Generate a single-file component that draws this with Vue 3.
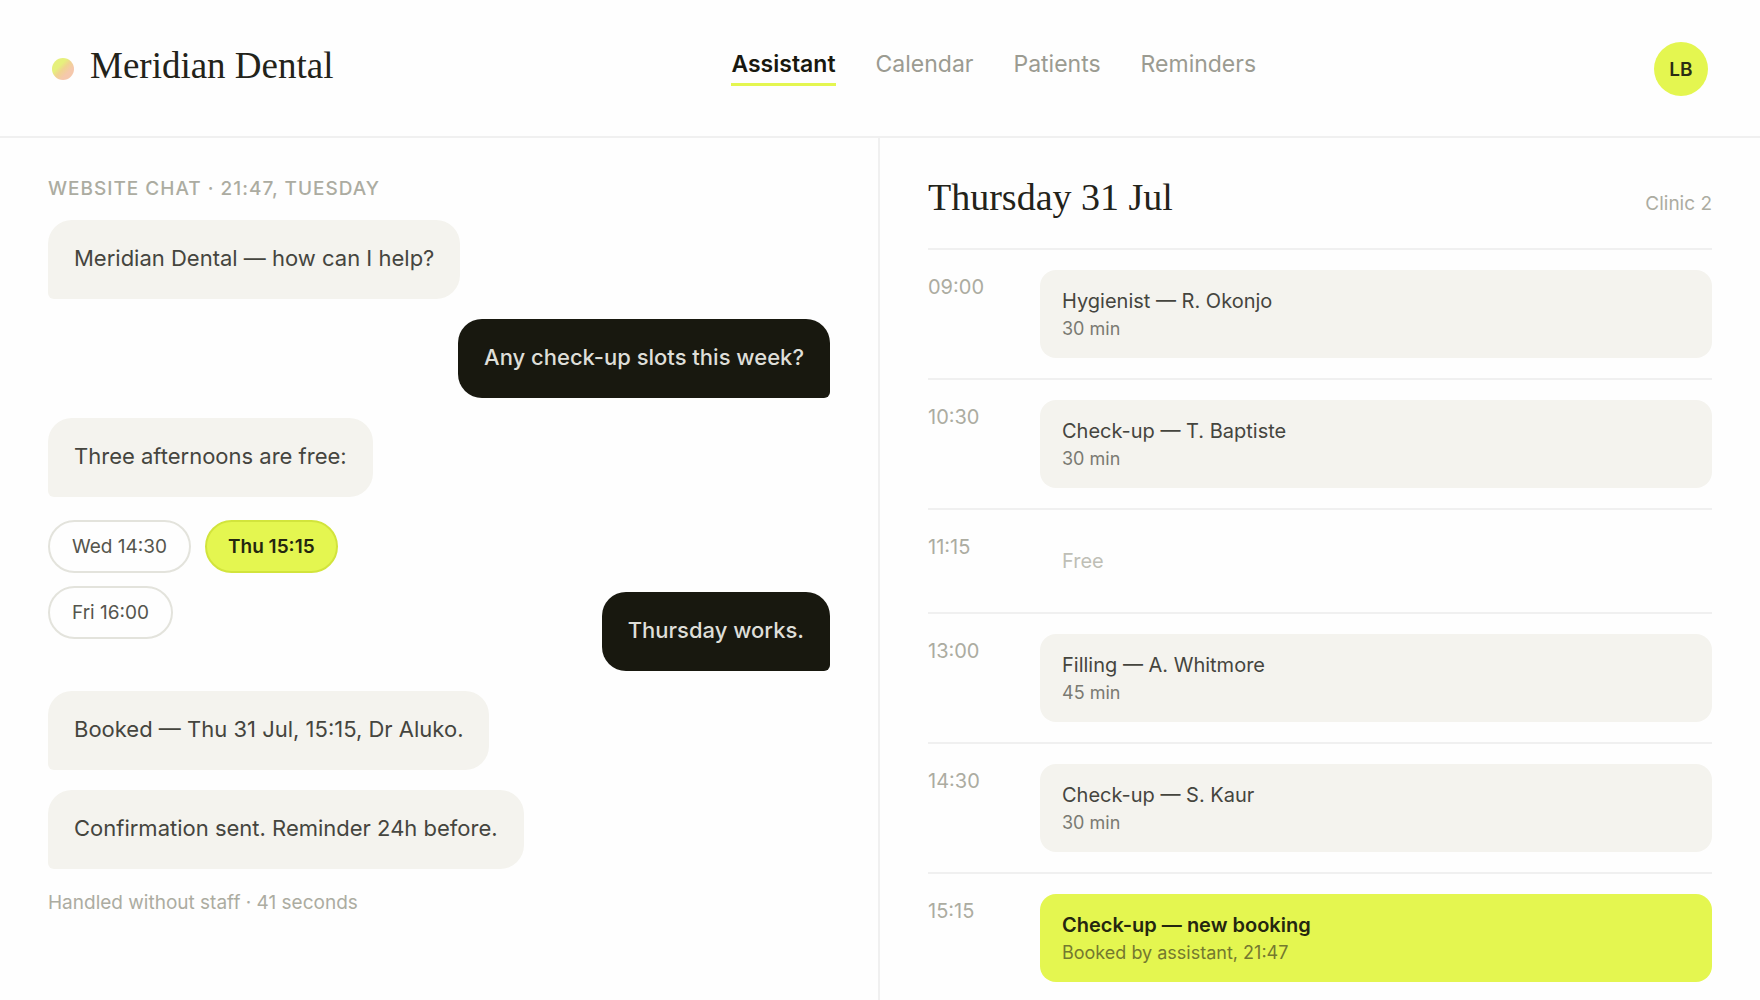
<script setup>
import { ref } from 'vue'

const tabs = ['Assistant', 'Calendar', 'Patients', 'Reminders']
const activeTab = ref('Assistant')

const slots = ['Wed 14:30', 'Thu 15:15', 'Fri 16:00']
const chosenSlot = ref('Thu 15:15')

const appointments = [
  { time: '09:00', title: 'Hygienist — R. Okonjo', detail: '30 min' },
  { time: '10:30', title: 'Check-up — T. Baptiste', detail: '30 min' },
  { time: '11:15', free: true },
  { time: '13:00', title: 'Filling — A. Whitmore', detail: '45 min' },
  { time: '14:30', title: 'Check-up — S. Kaur', detail: '30 min' },
  { time: '15:15', title: 'Check-up — new booking', detail: 'Booked by assistant, 21:47', isNew: true }
]
</script>

<template>
  <div class="app">
    <header class="topbar">
      <div class="brand">
        <span class="brand-dot" aria-hidden="true"></span>
        <span class="brand-name">Meridian Dental</span>
      </div>
      <nav class="tabs" aria-label="Main">
        <a
          v-for="tab in tabs"
          :key="tab"
          href="#"
          class="tab"
          :class="{ active: tab === activeTab }"
          :aria-current="tab === activeTab ? 'page' : undefined"
          @click.prevent="activeTab = tab"
        >{{ tab }}</a>
      </nav>
      <button type="button" class="avatar" title="Account">LB</button>
    </header>

    <main class="columns">
      <section class="chat" aria-label="Chat">
        <h2 class="chat-label">Website chat · 21:47, Tuesday</h2>
        <p class="bubble">Meridian Dental — how can I help?</p>
        <p class="bubble sent">Any check-up slots this week?</p>
        <p class="bubble">Three afternoons are free:</p>
        <div class="reply-row">
          <div class="chips">
            <button
              v-for="slot in slots"
              :key="slot"
              type="button"
              class="chip"
              :class="{ chosen: slot === chosenSlot }"
              :aria-pressed="slot === chosenSlot"
              @click="chosenSlot = slot"
            >{{ slot }}</button>
          </div>
          <p class="bubble sent">Thursday works.</p>
        </div>
        <p class="bubble">Booked — Thu 31 Jul, 15:15, Dr Aluko.</p>
        <p class="bubble">Confirmation sent. Reminder 24h before.</p>
        <p class="footnote">Handled without staff · 41 seconds</p>
      </section>

      <section class="day" aria-label="Schedule">
        <div class="day-head">
          <h1 class="day-title">Thursday 31 Jul</h1>
          <span class="clinic">Clinic 2</span>
        </div>
        <ol class="agenda">
          <li v-for="item in appointments" :key="item.time" class="entry">
            <time class="time">{{ item.time }}</time>
            <div v-if="item.free" class="free">Free</div>
            <div v-else class="card" :class="{ fresh: item.isNew }">
              <div class="card-title">{{ item.title }}</div>
              <div class="card-detail">{{ item.detail }}</div>
            </div>
          </li>
        </ol>
      </section>
    </main>
  </div>
</template>

<style>
body {
  margin: 0;
  background: #fefefe;
}
</style>

<style scoped>
.app {
  --ink: #18180f;
  --text: #45453e;
  --muted: #9b9b91;
  --faint: #acaca1;
  --line: #f0f0f0;
  --sand: #f4f3ee;
  --lime: #e4f650;
  display: flex;
  flex-direction: column;
  min-height: 100vh;
  color: var(--text);
  font-family: Inter, "Liberation Sans", sans-serif;
}

h1, h2, p, ol {
  margin: 0;
  padding: 0;
}

button {
  font-family: inherit;
  cursor: pointer;
}

.topbar {
  display: flex;
  align-items: center;
  justify-content: space-between;
  padding: 42px 52px 40px;
  border-bottom: 2px solid var(--line);
}

.brand {
  display: flex;
  align-items: center;
  gap: 16px;
}

.brand-dot {
  width: 22px;
  height: 22px;
  border-radius: 50%;
  background: linear-gradient(135deg, #e6f07c 35%, #f0d490 50%, #f5c8ac 70%);
}

.brand-name {
  padding-bottom: 7px;
  color: #23231a;
  font: 37px/42px "Liberation Serif", serif;
}

.tabs {
  display: flex;
  gap: 40px;
}

.tab {
  padding-bottom: 7px;
  border-bottom: 3px solid transparent;
  color: var(--muted);
  font-size: 23px;
  line-height: 24px;
  text-decoration: none;
}

.tab.active {
  border-color: var(--lime);
  color: var(--ink);
  font-weight: 600;
}

.avatar {
  width: 54px;
  height: 54px;
  padding: 0;
  border: 0;
  border-radius: 50%;
  background: var(--lime);
  color: #2b2d14;
  font-size: 19px;
  font-weight: 600;
}

.columns {
  display: grid;
  flex: 1;
  grid-template-columns: 1fr 1fr;
}

.chat {
  display: flex;
  flex-direction: column;
  align-items: flex-start;
  gap: 20px;
  padding: 40px 48px;
  border-right: 2px solid var(--line);
}

.chat-label {
  color: var(--faint);
  font-size: 19px;
  font-weight: 500;
  line-height: 22px;
  letter-spacing: 1px;
  text-transform: uppercase;
}

.bubble {
  padding: 20px 26px 23px;
  border-radius: 24px 24px 24px 6px;
  background: var(--sand);
  font-size: 22px;
  line-height: 36px;
}

.bubble.sent {
  align-self: flex-end;
  border-radius: 24px 24px 6px 24px;
  background: var(--ink);
  color: #deded8;
  font-weight: 500;
}

.reply-row {
  display: flex;
  align-self: stretch;
  align-items: flex-start;
  justify-content: space-between;
}

.reply-row .bubble {
  margin-top: 75px;
}

.chips {
  display: flex;
  flex-wrap: wrap;
  gap: 13px 14px;
  max-width: 320px;
  padding-top: 3px;
}

.chip {
  padding: 0 22px;
  border: 2px solid #e3e3dc;
  border-radius: 27px;
  background: #fefefe;
  color: #55554d;
  font-size: 19px;
  line-height: 49px;
}

.chip.chosen {
  padding: 0 21px;
  border-color: #d2e43c;
  background: var(--lime);
  color: #24260f;
  font-weight: 600;
}

.footnote {
  color: var(--faint);
  font-size: 19px;
  line-height: 28px;
}

.day {
  padding: 40px 48px 0;
}

.day-head {
  display: flex;
  align-items: baseline;
  justify-content: space-between;
  padding-bottom: 30px;
}

.day-title {
  color: #23231a;
  font: 38px/38px "Liberation Serif", serif;
}

.clinic {
  color: var(--faint);
  font-size: 19px;
  line-height: 28px;
}

.agenda {
  list-style: none;
}

.entry {
  display: grid;
  grid-template-columns: 88px 1fr;
  align-items: start;
  gap: 24px;
  padding: 20px 0;
  border-top: 2px solid var(--line);
}

.entry:last-child {
  padding-bottom: 0;
}

.time {
  padding-top: 3px;
  color: var(--faint);
  font-size: 20px;
  line-height: 28px;
}

.card {
  padding: 17px 22px 15px;
  border-radius: 16px;
  background: var(--sand);
  line-height: 28px;
}

.card-title {
  font-size: 20px;
}

.card-detail {
  color: #7a7a72;
  font-size: 18px;
}

.card.fresh {
  background: var(--lime);
}

.fresh .card-title {
  color: #24260f;
  font-weight: 600;
}

.fresh .card-detail {
  color: #74792f;
}

.free {
  padding: 16px 22px;
  color: #bfbfb6;
  font-size: 20px;
  line-height: 30px;
}
</style>
